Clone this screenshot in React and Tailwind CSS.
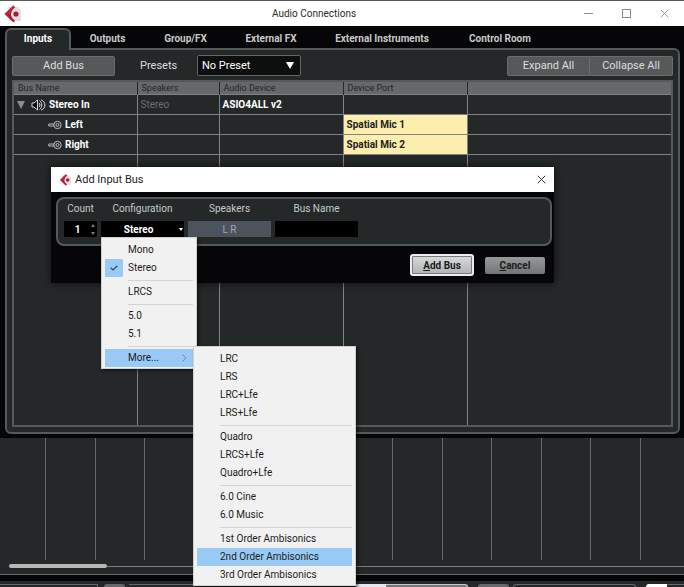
import React, { useState } from 'react';

const tabs = ['Outputs', 'Group/FX', 'External FX', 'External Instruments', 'Control Room'];

const tabWidths = ['w-[73px]', 'w-[83px]', 'w-[88px]', 'w-[134px]', 'w-[102px]'];

const mainMenu = [['Mono', 'Stereo'], ['LRCS'], ['5.0', '5.1'], ['More...']];

const subMenu = [
  ['LRC', 'LRS', 'LRC+Lfe', 'LRS+Lfe'],
  ['Quadro', 'LRCS+Lfe', 'Quadro+Lfe'],
  ['6.0 Cine', '6.0 Music'],
  ['1st Order Ambisonics', '2nd Order Ambisonics', '3rd Order Ambisonics'],
];

const Logo = ({ className }) => (
  <svg viewBox="0 0 18 18" className={className} aria-hidden="true">
    <path d="M5 2 H15 L18 5 V16 H6 Z" fill="#e2dfdf" />
    <path d="M10.5 0.5 L1.5 9 L10.5 17.5 L12 15.5 C9 13.5 8 11.5 8 9 C8 6.5 9 4.5 12 2.5 Z" fill="#a81c35" />
    <path d="M10.5 0.5 L1.5 9 H8 C8 6.5 9 4.5 12 2.5 Z" fill="#bd2840" />
    <circle cx="13" cy="9" r="2.6" fill="#a81c35" />
  </svg>
);

const SpeakerIcon = () => (
  <svg viewBox="0 0 15 12" className="h-3 w-[15px]" fill="none" stroke="#d6d8d8" aria-hidden="true">
    <path d="M1 4 H3 L6.5 1 V11 L3 8 H1 Z" fill="#0b0c0c" />
    <path d="M8.5 1.5 C11.5 3.5 11.5 8.5 8.5 10.5" />
    <path d="M8 4 C9.3 5 9.3 7 8 8" />
    <path d="M10 0.8 C15.2 2.5 15.2 9.5 10 11.2" />
  </svg>
);

const PlugIcon = () => (
  <svg viewBox="0 0 14 10" className="h-[10px] w-[14px]" fill="none" stroke="#b9bcbc" aria-hidden="true">
    <path d="M6 4 H0.8 V6 H6" />
    <circle cx="9.5" cy="5" r="3.7" />
    <circle cx="9.5" cy="5" r="1.5" />
  </svg>
);

const CloseIcon = ({ className }) => (
  <svg viewBox="0 0 10 10" className={className} fill="none" stroke="currentColor" aria-hidden="true">
    <path d="M0.8 0.8 L9.2 9.2 M9.2 0.8 L0.8 9.2" />
  </svg>
);

const Menu = ({ groups, checked, active, className }) => (
  <div
    role="menu"
    className={`absolute z-20 border border-[#d0d0d0] bg-[#f1f1f1] px-[3px] pt-[3px] pb-px text-[10px] leading-[18px] text-[#1c1c1c] shadow-[2px_2px_3px_rgba(0,0,0,0.5)] ${className}`}
  >
    {groups.map((group, i) => (
      <div key={i}>
        {i > 0 && <div className="ml-[23px] flex h-[6px] items-center"><div className="h-px w-full bg-[#d4d4d4]" /></div>}
        {group.map((item) => (
          <button
            key={item}
            type="button"
            role="menuitem"
            className={`flex h-[18px] w-full items-center text-left whitespace-nowrap ${item === active ? 'bg-[#99caf5]' : ''}`}
          >
            <span className={`mr-[5px] flex size-[18px] shrink-0 items-center justify-center ${item === checked ? 'bg-[#99caf5]' : ''}`}>
              {item === checked && (
                <svg viewBox="0 0 8 6" className="h-[6px] w-2" fill="none" stroke="#2a4a68" strokeWidth="1.2" aria-hidden="true">
                  <path d="M0.7 2.8 L3 5 L7.3 0.8" />
                </svg>
              )}
            </span>
            <span className="grow">{item}</span>
            {item === 'More...' && (
              <svg viewBox="0 0 5 8" className="mr-[6px] h-2 w-[5px]" fill="none" stroke="#6d8ba5" aria-hidden="true">
                <path d="M0.7 0.7 L4 4 L0.7 7.3" />
              </svg>
            )}
          </button>
        ))}
      </div>
    ))}
  </div>
);

const AddInputBus = () => {
  const [count, setCount] = useState(1);
  const [busName, setBusName] = useState('');

  return (
    <div role="dialog" aria-label="Add Input Bus" className="absolute top-[167px] left-[51px] z-10 w-[503px] bg-[#060608] shadow-[0_0_8px_rgba(0,0,0,0.7)]">
      <div className="flex h-[25px] items-center bg-white pr-2 pl-2 text-[#1c1c1c]">
        <Logo className="size-3" />
        <h2 className="ml-1 grow pt-px text-[11px] leading-4">Add Input Bus</h2>
        <button type="button" aria-label="Close dialog">
          <CloseIcon className="size-[9px]" />
        </button>
      </div>

      <div className="mt-[5px] mr-[2px] ml-[5px] flex h-[49px] gap-1 rounded-lg border-2 border-[#56595a] bg-[#252829] px-[6px] pt-[3px] text-[10px] text-[#c8caca]">
        <div className="w-[33px]">
          <label htmlFor="count" className="block text-center leading-[14px]">Count</label>
          <div className="mt-[5px] flex h-4 items-center bg-black">
            <input
              id="count"
              value={count}
              onChange={(e) => setCount(e.target.value)}
              className="w-[27px] bg-transparent text-center font-bold text-white outline-none"
            />
            <div className="flex flex-col gap-[5px]">
              <button type="button" aria-label="Increase" className="border-x-2 border-b-3 border-transparent border-b-[#777]" />
              <button type="button" aria-label="Decrease" className="border-x-2 border-t-3 border-transparent border-t-[#777]" />
            </div>
          </div>
        </div>
        <div className="w-[83px]">
          <label htmlFor="configuration" className="block text-center leading-[14px]">Configuration</label>
          <div className="relative mt-[5px]">
            <select id="configuration" className="block h-4 w-full appearance-none bg-black pr-2 text-center font-bold text-white outline-none">
              <option>Stereo</option>
              <option>Mono</option>
            </select>
            <span className="pointer-events-none absolute top-[7px] right-px border-x-2 border-t-3 border-transparent border-t-white" />
          </div>
        </div>
        <div className="w-[83px]">
          <label htmlFor="speakers" className="block text-center leading-[14px]">Speakers</label>
          <input id="speakers" readOnly value="L R" className="mt-[5px] block h-4 w-full bg-[#4c535c] text-center text-[#9aa7b8] outline-none" />
        </div>
        <div className="w-[83px]">
          <label htmlFor="busname" className="block text-center leading-[14px]">Bus Name</label>
          <input
            id="busname"
            value={busName}
            onChange={(e) => setBusName(e.target.value)}
            className="mt-[5px] block h-4 w-full bg-black px-1 text-white outline-none"
          />
        </div>
      </div>

      <div className="flex items-center justify-end gap-[11px] pt-2 pr-[9px] pb-[7px] text-[10px] font-bold text-[#1b1c1c]">
        <button type="button" className="h-[22px] w-16 rounded-[3px] border-2 border-[#ececec] bg-linear-to-b from-[#d8dadb] to-[#b0b3b4] ring-1 ring-[#77797a] ring-inset">
          <u>A</u>dd Bus
        </button>
        <button type="button" className="h-[17px] w-[60px] rounded-[2px] bg-linear-to-b from-[#969899] to-[#737677]">
          <u>C</u>ancel
        </button>
      </div>
    </div>
  );
};

const App = () => {
  const [preset, setPreset] = useState('No Preset');

  return (
    <div className="relative flex h-screen flex-col overflow-hidden bg-[#252829] font-['Roboto','Open_Sans',sans-serif]">
      <section className="border-t border-[#5a5a5a] bg-[#060608] px-[5px] pb-[4px]">
        <header className="-mx-[5px] flex h-[25px] items-center bg-white px-[3px]">
          <div className="w-[42px]">
            <Logo className="size-[18px]" />
          </div>
          <h1 className="grow text-center text-[10px] text-[#2b2b2b]">Audio Connections</h1>
          <div className="flex w-[98px] items-center justify-end gap-[29px] pr-3 text-[#8c8c8c]">
            <button type="button" aria-label="Minimize" className="h-px w-[9px] bg-[#8c8c8c]" />
            <button type="button" aria-label="Maximize" className="size-[9px] border border-[#8c8c8c]" />
            <button type="button" aria-label="Close">
              <CloseIcon className="size-[9px]" />
            </button>
          </div>
        </header>

        <nav className="flex items-end pt-[2px] text-[10px] font-bold text-[#c9caca]">
          <button type="button" className="-mb-[2px] h-[22px] w-[66px] rounded-t-md border-2 border-b-0 border-[#56595a] bg-[#252829] pb-1 text-white">
            Inputs
          </button>
          {tabs.map((tab, i) => (
            <button key={tab} type="button" className={`h-5 whitespace-nowrap ${tabWidths[i]}`}>
              {tab}
            </button>
          ))}
        </nav>

        <main className="mr-[-1px] rounded-b-md rounded-tr-md border-2 border-[#56595a] bg-[#252829] px-[5px] pt-[5px] pb-[5px]">
          <div className="flex h-[21px] items-center text-[11px] text-[#dcdddd]">
            <button type="button" className="h-5 w-[103px] rounded-[2px] border border-[#6a6d6e] bg-[#56595a] pt-px">Add Bus</button>
            <label htmlFor="preset" className="ml-[25px] w-[57px] pt-px">Presets</label>
            <div className="relative">
              <select
                id="preset"
                value={preset}
                onChange={(e) => setPreset(e.target.value)}
                className="block h-[21px] w-[104px] appearance-none rounded-[2px] border border-[#626566] bg-[#0d0e0e] pt-px pl-1 text-white outline-none"
              >
                <option>No Preset</option>
              </select>
              <span className="pointer-events-none absolute top-[7px] right-[7px] border-x-4 border-t-[7px] border-transparent border-t-white" />
            </div>
            <div className="ml-auto flex">
              <button type="button" className="h-5 w-[83px] rounded-l-[2px] border border-[#6a6d6e] bg-[#56595a] pt-px">Expand All</button>
              <button type="button" className="h-5 w-[83px] rounded-r-[2px] border border-l-0 border-[#6a6d6e] bg-[#56595a] pt-px">Collapse All</button>
            </div>
          </div>

          <table className="mt-1 w-full table-fixed border-collapse border-2 border-[#56595a] text-left text-[10px] leading-[14px] text-white">
            <colgroup>
              <col className="w-[124px]" />
              <col className="w-[82px]" />
              <col className="w-[124px]" />
              <col className="w-[124px]" />
              <col />
            </colgroup>
            <thead className="bg-[#66696a] text-[9px] leading-3 text-[#222526]">
              <tr className="h-3 [&>th]:border-r [&>th]:border-[#252829] [&>th]:p-0 [&>th]:pl-1 [&>th]:font-normal">
                <th>Bus Name</th>
                <th>Speakers</th>
                <th>Audio Device</th>
                <th>Device Port</th>
                <th aria-label="Notes" />
              </tr>
            </thead>
            <tbody className="[&_td]:border [&_td]:border-[#808384] [&_td]:p-0">
              <tr className="h-5">
                <td>
                  <div className="flex items-center pl-[3px] font-bold">
                    <span className="border-x-4 border-t-[8px] border-transparent border-t-[#8b8e8f]" />
                    <span className="mr-[3px] ml-[6px]"><SpeakerIcon /></span>
                    Stereo In
                  </div>
                </td>
                <td><span className="pl-[3px] text-[#6b6e6f]">Stereo</span></td>
                <td><span className="pl-[3px] font-bold">ASIO4ALL v2</span></td>
                <td />
                <td />
              </tr>
              {[['Left', 'Spatial Mic 1'], ['Right', 'Spatial Mic 2']].map(([name, port]) => (
                <tr key={name} className="h-5 font-bold">
                  <td>
                    <div className="flex items-center gap-[3px] pl-[34px]">
                      <PlugIcon />
                      {name}
                    </div>
                  </td>
                  <td />
                  <td />
                  <td className="bg-[#fdeeae] text-[#222]"><span className="pl-[3px]">{port}</span></td>
                  <td />
                </tr>
              ))}
              <tr className="h-[271px]">
                <td />
                <td />
                <td />
                <td />
                <td />
              </tr>
            </tbody>
          </table>
        </main>
      </section>

      {/* mixer area behind the window */}
      <div className="mr-[43px] ml-[45px] grid h-[122px] shrink-0 grid-cols-12 border-l border-[#66696a]">
        {Array.from({ length: 12 }, (_, i) => (
          <div key={i} className="border-r border-[#66696a]" />
        ))}
      </div>
      <div className="mt-1 flex h-[5px] shrink-0 items-center pl-[9px]">
        <div className="h-1 w-[98px] rounded-full bg-[#b9b7b5]" />
        <div className="h-px grow bg-[#7a7d7e]" />
      </div>
      <div className="mt-[5px] h-[7px] shrink-0 border-t border-[#66696a] bg-[#060608]" />
      <div className="flex grow items-stretch pt-[3px]">
        <div className="w-[98px] border-t border-r border-[#66696a]" />
        <div className="ml-[6px] w-[21px] rounded-t-sm bg-[#66696a]" />
        <div className="ml-1 w-[227px] border-t border-[#66696a]" />
        <div className="w-[30px] bg-[#e4e6f2]" />
        <div className="w-[82px] rounded-tr-sm border-t border-r border-[#c4c5c5] bg-[#747777]" />
        <div className="ml-[10px] w-[31px] rounded-t-sm bg-[#66696a]" />
        <div className="ml-1 w-[123px] rounded-t-sm border border-b-0 border-[#66696a]" />
        <div className="ml-[10px] w-[21px] rounded-tl-sm bg-white" />
        <div className="grow border-t border-[#66696a]" />
      </div>

      <AddInputBus />
      <Menu groups={mainMenu} checked="Stereo" active="More..." className="top-[237px] left-[101px] w-[96px]" />
      <Menu groups={subMenu} active="2nd Order Ambisonics" className="top-[346px] left-[193px] w-[163px]" />
    </div>
  );
};

export default App;
